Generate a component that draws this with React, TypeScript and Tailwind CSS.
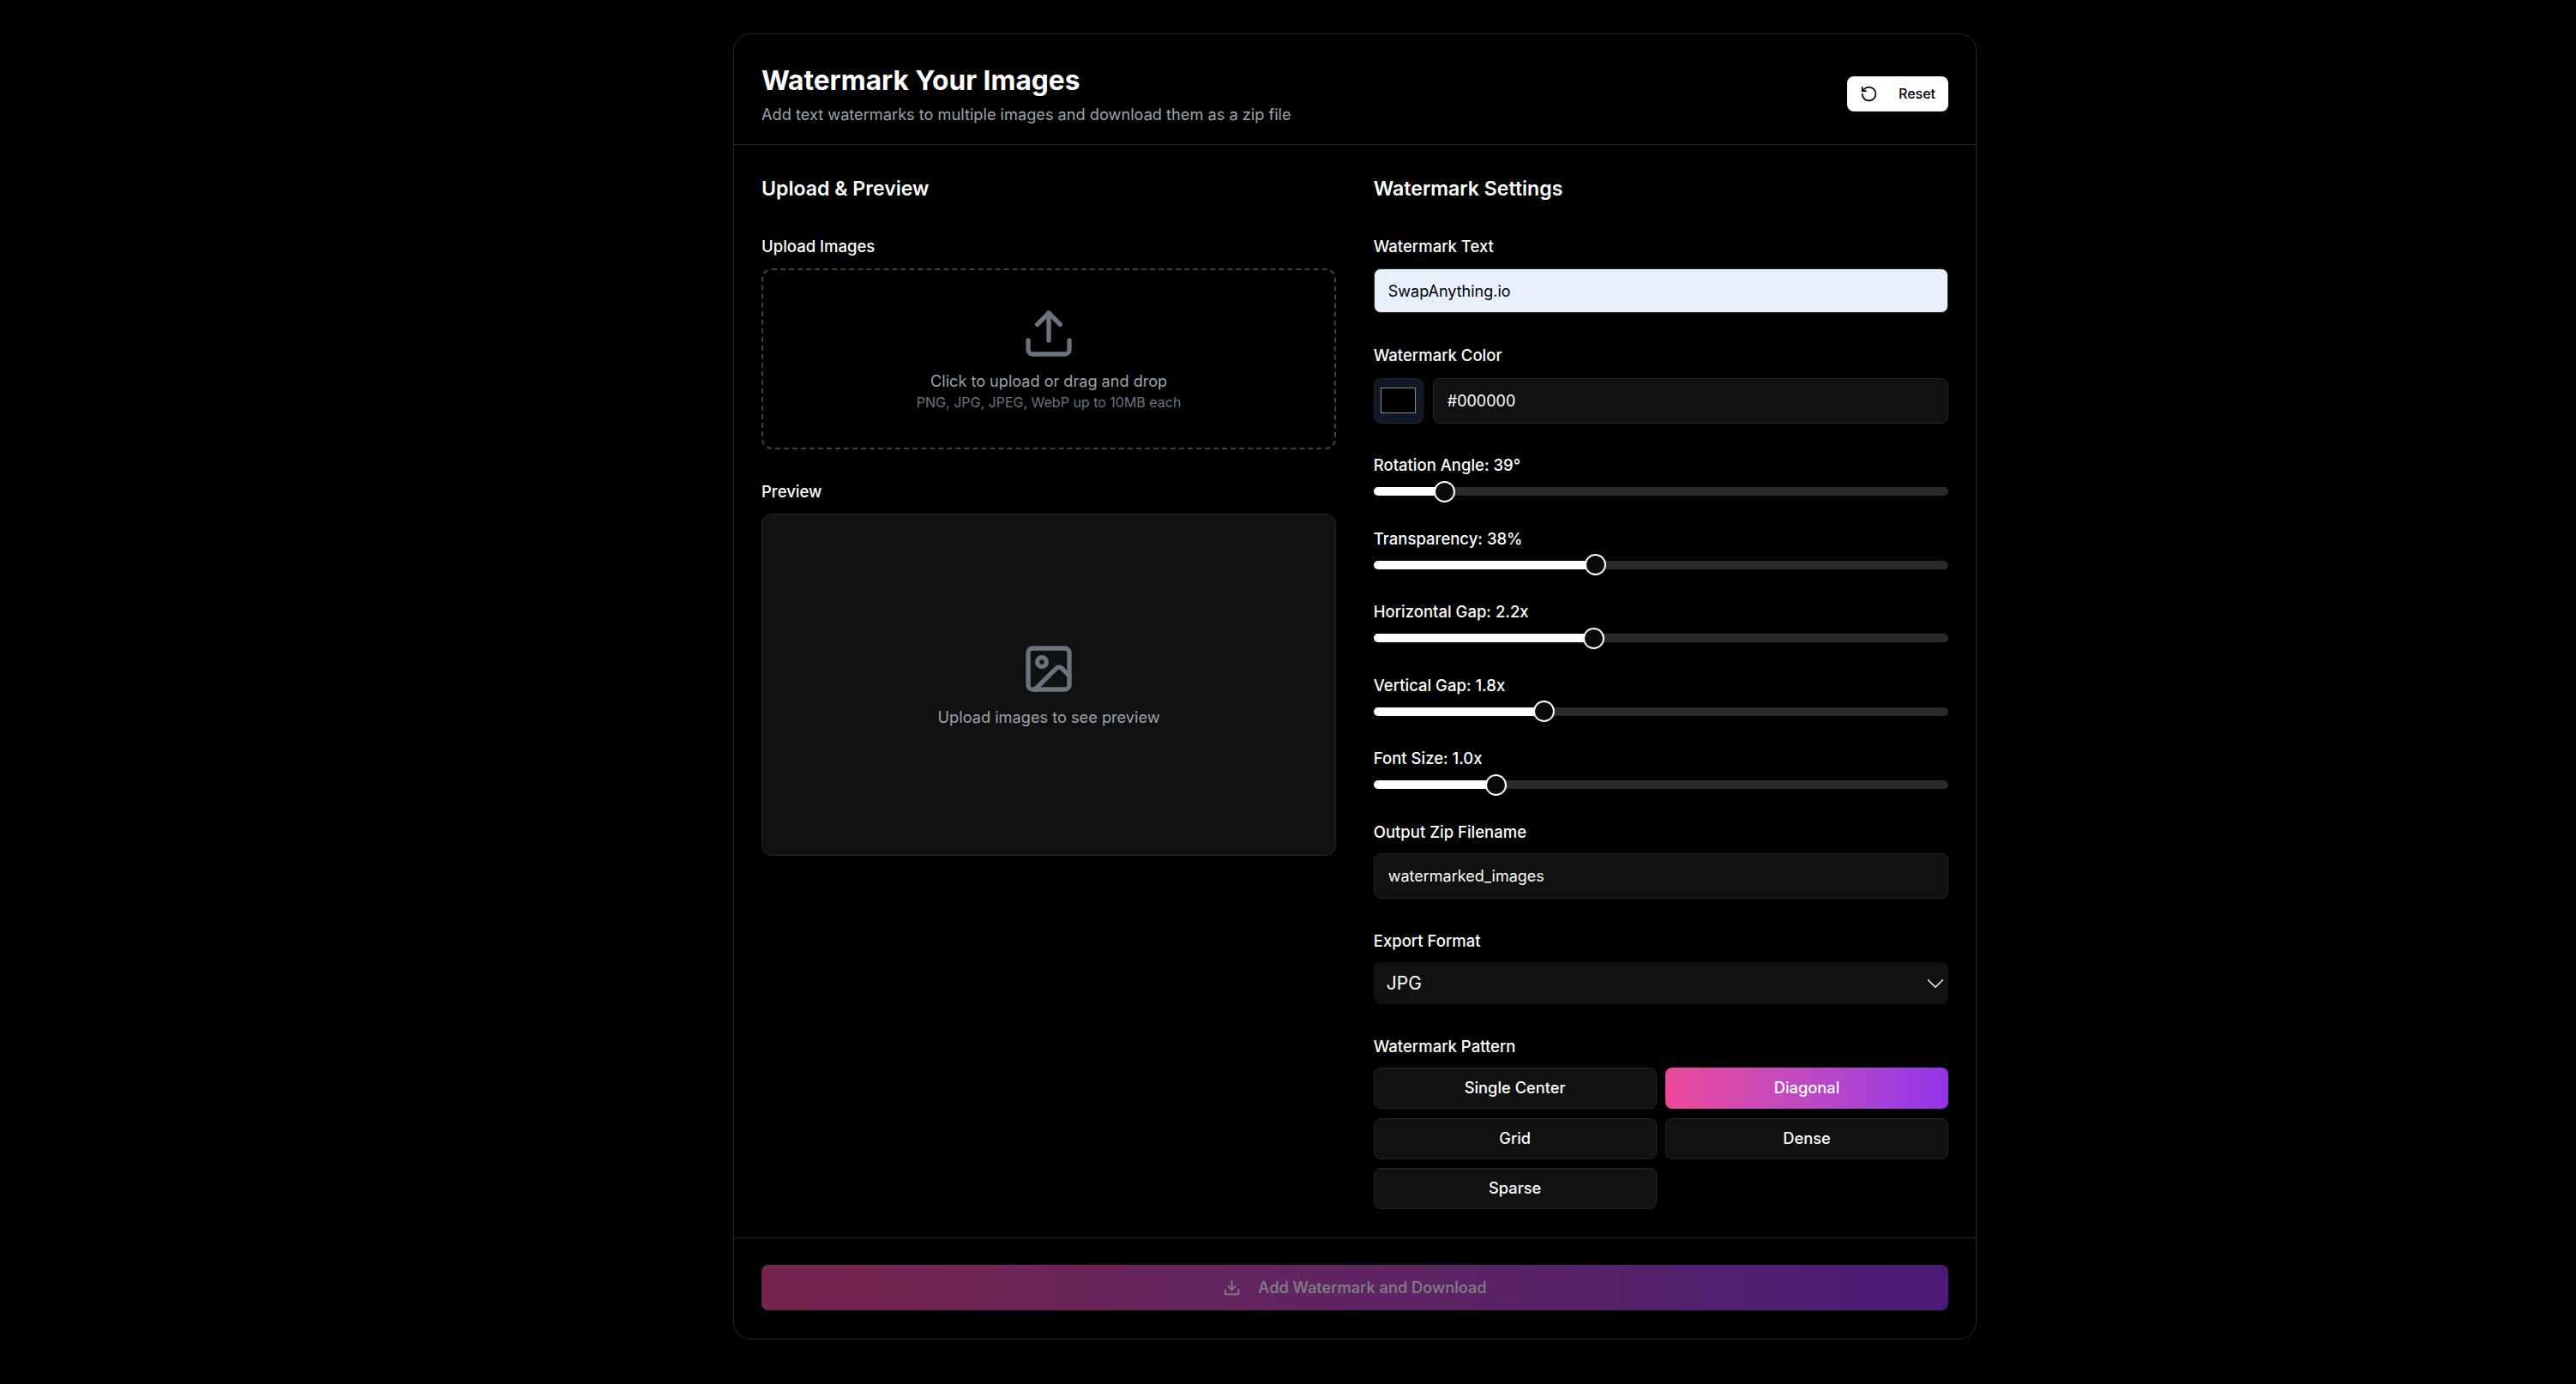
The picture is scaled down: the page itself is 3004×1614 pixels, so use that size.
import { Upload, Image, RotateCcw, Download, ChevronDown } from "lucide-react";

const labelClass = "block h-[25px] leading-[25px] text-[18.5px] font-medium text-white whitespace-nowrap";
const controlClass = "w-full rounded-[8px] border border-[#1f2430] bg-[#111111] text-[18px] text-white outline-none";

const sliders = [
  { label: "Rotation Angle: 39°", thumb: 82.5 },
  { label: "Transparency: 38%", thumb: 258.5 },
  { label: "Horizontal Gap: 2.2x", thumb: 256.5 },
  { label: "Vertical Gap: 1.8x", thumb: 199 },
  { label: "Font Size: 1.0x", thumb: 142.5 },
];

function Slider({ label, thumb }: { label: string; thumb: number }) {
  return (
    <div className="mb-[30px]">
      <div className={labelClass}>{label}</div>
      <div className="relative mt-[5.5px] h-[25px] flex items-center">
        <div className="h-[10px] w-full rounded-full bg-[#2a2a2a] overflow-hidden">
          <div className="h-full bg-white" style={{ width: thumb }} />
        </div>
        <div
          className="absolute top-0 h-[25px] w-[25px] rounded-full border-2 border-white bg-[#0a0a0a]"
          style={{ left: thumb - 12.5 }}
        />
      </div>
    </div>
  );
}

function PatternButton({ text, active }: { text: string; active?: boolean }) {
  return (
    <button
      className={
        active
          ? "h-[48px] rounded-[8px] bg-linear-to-r from-[#ec4899] to-[#9333ea] text-[18.3px] font-medium text-white"
          : "h-[48px] rounded-[8px] border border-[#1f2430] bg-[#111111] text-[18.3px] font-medium text-white"
      }
    >
      {text}
    </button>
  );
}

export default function App() {
  return (
    <div className="min-h-screen bg-black pl-[855px] pt-[39px] [font-family:Inter,sans-serif] antialiased">
      <div className="h-[1523px] w-[1450px] rounded-[20px] border border-[#26282e] flex flex-col">
        <header className="h-[129px] shrink-0 border-b border-[#26282e] px-[32px] flex items-center justify-between">
          <div className="pt-[12px]">
            <h1 className="text-[31.7px] leading-[40px] font-bold text-white">Watermark Your Images</h1>
            <p className="mt-[6px] text-[18.2px] leading-[26px] text-[#9ca3af]">
              Add text watermarks to multiple images and download them as a zip file
            </p>
          </div>
          <button className="mt-[10px] h-[41px] w-[118px] rounded-[8px] bg-white flex items-center justify-center gap-[24px] text-[16px] font-medium text-black">
            <RotateCcw size={21} strokeWidth={2} />
            <span>Reset</span>
          </button>
        </header>

        <main className="flex-1 grid grid-cols-2 gap-[43.5px] px-[32px] pt-[34px]">
          <section>
            <h2 className="h-[34px] leading-[34px] text-[23.1px] font-semibold text-white">Upload &amp; Preview</h2>
            <div className={`${labelClass} mt-[38px]`}>Upload Images</div>
            <div className="mt-[13px] h-[211px] rounded-[12px] border-2 border-dashed border-[#374151] flex flex-col items-center pt-[42px]">
              <Upload size={64} strokeWidth={2} className="text-[#6b7280]" />
              <p className="mt-[9px] h-[28px] leading-[28px] text-[18.1px] text-[#9ca3af]">Click to upload or drag and drop</p>
              <p className="h-[22px] leading-[22px] text-[16px] text-[#6b7280]">PNG, JPG, JPEG, WebP up to 10MB each</p>
            </div>
            <div className={`${labelClass} mt-[36.5px]`}>Preview</div>
            <div className="mt-[13px] h-[399px] rounded-[12px] border border-[#1f2430] bg-[#111111] flex flex-col items-center pt-[148px]">
              <Image size={64} strokeWidth={2} className="text-[#6b7280]" />
              <p className="mt-[10px] h-[28px] leading-[28px] text-[18.2px] text-[#9ca3af]">Upload images to see preview</p>
            </div>
          </section>

          <section>
            <h2 className="h-[34px] leading-[34px] text-[23.1px] font-semibold text-white">Watermark Settings</h2>
            <div className={`${labelClass} mt-[38px]`}>Watermark Text</div>
            <input
              readOnly
              value="SwapAnything.io"
              className="mt-[13px] h-[52px] w-full rounded-[8px] border border-[#1f2430] bg-[#e8f0fe] px-[16px] text-[18px] text-black outline-none"
            />
            <div className={`${labelClass} mt-[37px]`}>Watermark Color</div>
            <div className="mt-[13.5px] flex gap-[11px]">
              <div className="h-[53px] w-[58px] shrink-0 rounded-[8px] border border-[#1f2430] bg-[#111827] flex items-center justify-center">
                <div className="h-[30px] w-[41px] border border-[#8a8a8a] bg-black" />
              </div>
              <input readOnly value="#000000" className={`${controlClass} h-[53px] px-[16px]`} />
            </div>

            <div className="mt-[36.5px]">
              {sliders.map((s) => (
                <Slider key={s.label} label={s.label} thumb={s.thumb} />
              ))}
            </div>

            <div className={labelClass}>Output Zip Filename</div>
            <input readOnly value="watermarked_images" className={`${controlClass} mt-[12.5px] h-[53px] px-[16px]`} />

            <div className={`${labelClass} mt-[37px]`}>Export Format</div>
            <div className="mt-[12px] h-[49px] rounded-[8px] bg-[#111111] flex items-center justify-between pl-[15px] text-[21px] text-white">
              <span>JPG</span>
              <ChevronDown size={34} strokeWidth={1} className="mr-[-2px]" />
            </div>

            <div className={`${labelClass} mt-[36.5px]`}>Watermark Pattern</div>
            <div className="mt-[12.5px] grid grid-cols-2 gap-x-[10.5px] gap-y-[10.5px]">
              <PatternButton text="Single Center" />
              <PatternButton text="Diagonal" active />
              <PatternButton text="Grid" />
              <PatternButton text="Dense" />
              <PatternButton text="Sparse" />
            </div>
          </section>
        </main>

        <footer className="h-[118px] shrink-0 border-t border-[#26282e] px-[32px] pt-[31px]">
          <button className="relative h-[53px] w-full rounded-[8px] bg-linear-to-r from-[#ec4899] to-[#9333ea] opacity-50 flex items-center justify-center gap-[20px] text-[18.3px] font-medium text-white">
            <Download size={21} strokeWidth={2} />
            <span>Add Watermark and Download</span>
          </button>
        </footer>
      </div>
    </div>
  );
}
